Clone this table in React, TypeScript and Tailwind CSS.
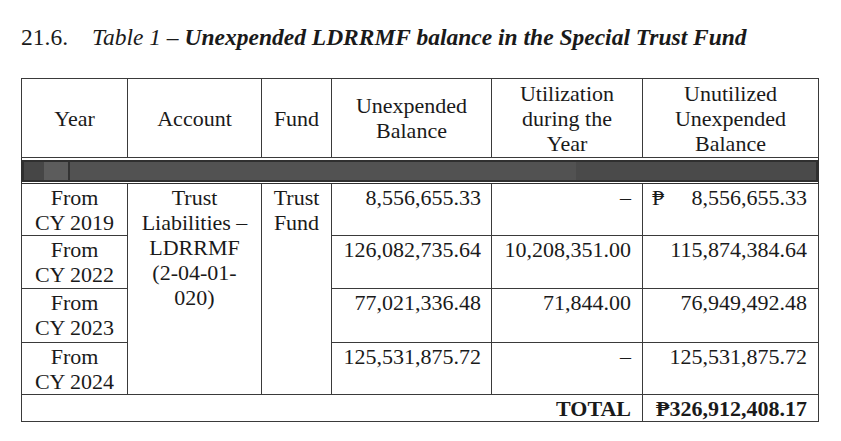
import React from "react";

const ROWS = [
  { year: "CY 2019", unexpended: "8,556,655.33", used: "–", unutilized: "8,556,655.33", peso: true, h: "h-[52px]" },
  { year: "CY 2022", unexpended: "126,082,735.64", used: "10,208,351.00", unutilized: "115,874,384.64", peso: false, h: "h-[53px]" },
  { year: "CY 2023", unexpended: "77,021,336.48", used: "71,844.00", unutilized: "76,949,492.48", peso: false, h: "h-[54px]" },
  { year: "CY 2024", unexpended: "125,531,875.72", used: "–", unutilized: "125,531,875.72", peso: false, h: "h-[52px]" },
];

const border = "border border-[#3a3a3a]";
const td = `${border} align-top pt-[1px]`;
const th = `${border} align-middle font-normal`;

export default function App() {
  return (
    <div className="min-h-[441px] w-[841px] bg-white pl-[21px] pt-[24px] text-[#1a1a1a] [font-family:'Liberation_Serif','Times_New_Roman',serif]">
      {/* Title */}
      <h1 className="text-[23.5px] leading-[27px]">
        <span className="inline-block w-[71px]">21.6.</span>
        <span className="italic">Table 1 – </span>
        <span className="font-bold italic">Unexpended LDRRMF balance in the Special Trust Fund</span>
      </h1>

      <table className="mt-[27px] w-[797px] table-fixed border-collapse text-[22px] leading-[25px]">
        <colgroup>
          <col className="w-[106px]" />
          <col className="w-[134px]" />
          <col className="w-[70px]" />
          <col className="w-[160px]" />
          <col className="w-[151px]" />
          <col className="w-[176px]" />
        </colgroup>
        <thead>
          <tr className="h-[79px]">
            <th className={th}>Year</th>
            <th className={th}>Account</th>
            <th className={th}>Fund</th>
            <th className={th}>
              Unexpended
              <br />
              Balance
            </th>
            <th className={th}>
              Utilization
              <br />
              during the
              <br />
              Year
            </th>
            <th className={th}>
              Unutilized
              <br />
              Unexpended
              <br />
              Balance
            </th>
          </tr>
          <tr className="h-[26px]">
            <td colSpan={6} className="border border-[#2e2e2e] p-0">
              <div className="flex h-[22px] border-2 border-[#2f2f2f] bg-[#4e4e4e]">
                <div className="w-[20px] bg-[#464646]" />
                <div className="w-[24px] bg-[#5c5c5c]" />
                <div className="w-[2px] bg-[#333]" />
                <div className="flex-1 bg-[#525252]" />
                <div className="w-[240px] bg-[#4a4a4a]" />
              </div>
            </td>
          </tr>
        </thead>
        <tbody>
          {ROWS.map((r, i) => (
            <tr key={r.year} className={r.h}>
              <td className={`${td} text-center`}>
                From
                <br />
                {r.year}
              </td>
              {i === 0 && (
                <>
                  <td rowSpan={4} className={`${td} text-center`}>
                    Trust
                    <br />
                    Liabilities –
                    <br />
                    LDRRMF
                    <br />
                    (2-04-01-
                    <br />
                    020)
                  </td>
                  <td rowSpan={4} className={`${td} text-center`}>
                    Trust
                    <br />
                    Fund
                  </td>
                </>
              )}
              <td className={`${td} pr-[10px] text-right`}>{r.unexpended}</td>
              <td className={`${td} pr-[11px] text-right`}>{r.used}</td>
              <td className={`${td} pl-[9px] pr-[11px]`}>
                <div className="flex justify-between">
                  <span>{r.peso ? "₱" : ""}</span>
                  <span>{r.unutilized}</span>
                </div>
              </td>
            </tr>
          ))}
          <tr className="h-[27px]">
            <td colSpan={5} className={`${border} pr-[11px] text-right align-middle font-bold`}>
              TOTAL
            </td>
            <td className={`${border} pr-[11px] text-right align-middle font-bold`}>₱326,912,408.17</td>
          </tr>
        </tbody>
      </table>
    </div>
  );
}
